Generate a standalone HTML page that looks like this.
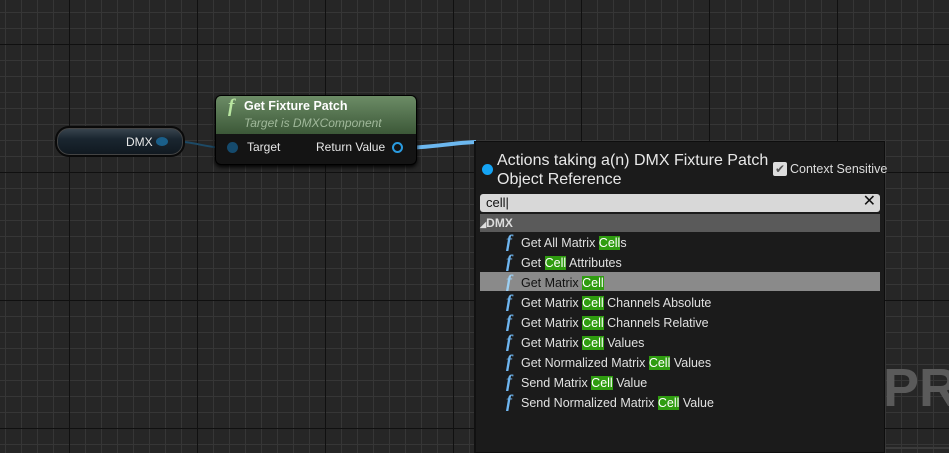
<!DOCTYPE html>
<html><head><style>
*{margin:0;padding:0;box-sizing:border-box}
body{width:949px;height:453px;overflow:hidden;position:relative;font-family:"Liberation Sans",sans-serif;
background-color:#262626;
background-image:
linear-gradient(to right,#101010 0,#101010 1px,transparent 1px),
linear-gradient(to bottom,#101010 0,#101010 1px,transparent 1px),
linear-gradient(to right,#363636 0,#363636 1px,transparent 1px),
linear-gradient(to bottom,#363636 0,#363636 1px,transparent 1px);
background-size:128px 128px,128px 128px,16px 16px,16px 16px;
background-position:69px 0,0 44px,5px 0,0 12px;}
.abs{position:absolute}
.dmx{left:55px;top:126px;width:130px;height:31px;border-radius:14px;background:linear-gradient(#3a4650,#1a2630 40%,#10181f);border:2px solid #0a0a0a;box-shadow:0 0 0 1px #444 inset}
.node{left:215px;top:95px;width:202px;height:70px;border-radius:6px;background:#141414;border:1px solid #000;overflow:hidden;box-shadow:0 2px 4px #000}
.head{height:38px;background:linear-gradient(#6c8c66,#3c5838);position:relative}
.f{font-family:"Liberation Serif",serif;font-style:italic;font-weight:bold}
.pop{left:474px;top:141px;width:411px;height:312px;background:#1b1b1b;border:1px solid #0e0e0e;border-left:2px solid #111}
.row{position:absolute;left:30px;height:20px;font-size:12.5px;color:#e0e0e0;line-height:20px}
.row .f{color:#6fb6f0;font-size:18px;margin-right:6px;display:inline-block;width:9px}
.h{background:#2f9c10;color:#fff}
</style></head><body>
<svg class="abs" style="left:0;top:0" width="949" height="453">
<path d="M163 141 C200 141,200 148,232 148" stroke="#1d4a66" stroke-width="2" fill="none"/>
<path d="M400 148 C430 148,450 143,476 142" stroke="#6cb8f0" stroke-width="4" fill="none"/>
</svg>
<div class="abs dmx"></div>
<div class="abs" style="left:126px;top:135px;color:#e8e8e8;font-size:12px">DMX</div>
<div class="abs" style="left:156px;top:137px;width:12px;height:9px;border-radius:50%;background:#1a5f8a"></div>
<div class="abs node">
<div class="head">
<span class="abs f" style="left:12px;top:0px;color:#b8e6a0;font-size:19px">f</span>
<span class="abs" style="left:28px;top:3px;color:#fff;font-weight:bold;font-size:12.5px">Get Fixture Patch</span>
<span class="abs" style="left:28px;top:20px;color:#a0b89a;font-style:italic;font-size:12px">Target is DMXComponent</span></div>
<div style="position:relative;height:32px">
<div class="abs" style="left:11px;top:8px;width:11px;height:11px;border-radius:50%;background:#154a6c"></div>
<div class="abs" style="left:31px;top:6px;color:#e6e6e6;font-size:12px">Target</div>
<div class="abs" style="left:100px;top:6px;color:#e6e6e6;font-size:12px">Return Value</div>
<div class="abs" style="left:176px;top:8px;width:11px;height:11px;border-radius:50%;border:2px solid #2a9be0"></div>
</div></div>
<div class="abs pop">
<div class="abs" style="left:6px;top:22px;width:11px;height:11px;border-radius:50%;background:#15a4f4"></div>
<div class="abs" style="left:21px;top:9px;color:#e8e8e8;font-size:16px;line-height:19px">Actions taking a(n) DMX Fixture Patch<br>Object Reference</div>
<div class="abs" style="left:297px;top:20px;width:14px;height:14px;background:#ddd;border-radius:2px;color:#555;font-size:12px;line-height:14px;text-align:center">✔</div>
<div class="abs" style="left:314px;top:20px;color:#ddd;font-size:12.5px;white-space:nowrap">Context Sensitive</div>
<div class="abs" style="left:4px;top:52px;width:400px;height:18px;background:#d8d8d8;border-radius:3px;font-size:13px;color:#111;padding-left:6px;line-height:18px">cell|<span style="position:absolute;right:4px;top:-1px;font-size:16px">✕</span></div>
<div class="abs" style="left:4px;top:72px;width:400px;height:18px;background:#5a5a5a;color:#ddd;font-weight:bold;font-size:12px;line-height:18px"><span style="font-size:8px">◢</span>DMX</div>
<div class="abs" style="left:4px;top:130px;width:400px;height:19px;background:#8a8a8a"></div>
<div class="row" style="top:89px"><span class="f">f</span>Get All Matrix <span class="h">Cell</span>s</div>
<div class="row" style="top:109px"><span class="f">f</span>Get <span class="h">Cell</span> Attributes</div>
<div class="row" style="top:129px;color:#111"><span class="f" style="color:#9cd0f4">f</span>Get Matrix <span class="h">Cell</span></div>
<div class="row" style="top:149px"><span class="f">f</span>Get Matrix <span class="h">Cell</span> Channels Absolute</div>
<div class="row" style="top:169px"><span class="f">f</span>Get Matrix <span class="h">Cell</span> Channels Relative</div>
<div class="row" style="top:189px"><span class="f">f</span>Get Matrix <span class="h">Cell</span> Values</div>
<div class="row" style="top:209px"><span class="f">f</span>Get Normalized Matrix <span class="h">Cell</span> Values</div>
<div class="row" style="top:229px"><span class="f">f</span>Send Matrix <span class="h">Cell</span> Value</div>
<div class="row" style="top:249px"><span class="f">f</span>Send Normalized Matrix <span class="h">Cell</span> Value</div>
</div>
<div class="abs" style="left:883px;top:358px;color:#5a5a5a;font-weight:bold;font-size:54px;line-height:60px">PR</div>
<div class="abs" style="left:885px;top:447px;width:64px;height:2px;background:#3a3a3a"></div>
</body></html>
